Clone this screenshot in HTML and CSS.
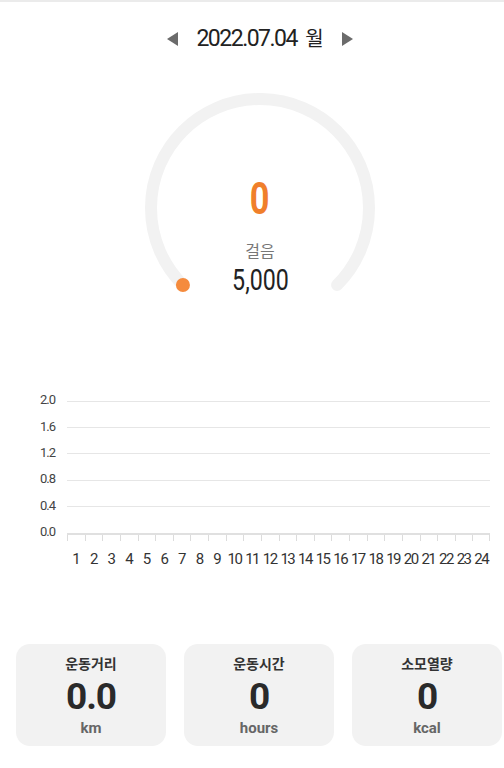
FILE: index.html
```html
<!DOCTYPE html>
<html lang="ko">
<head>
    <meta charset="UTF-8">
    <meta name="viewport" content="width=device-width, initial-scale=1.0">
    <title>걸음</title>
    <link rel="stylesheet" href="styles.css">
</head>
<body>
    <header class="date-bar">
        <svg class="arrow" width="11" height="14" viewBox="0 0 11 14"><polygon points="11,0 11,14 0,7"/></svg>
        <span class="date">2022.07.04 <span class="weekday">월</span></span>
        <svg class="arrow" width="11" height="14" viewBox="0 0 11 14"><polygon points="0,0 11,7 0,14"/></svg>
    </header>

    <section class="gauge">
        <svg class="gauge-ring" width="230" height="230" viewBox="0 0 230 230">
            <path d="M37.93 192.07 A109 109 0 1 1 192.07 192.07" fill="none" stroke="#f2f2f2" stroke-width="12" stroke-linecap="round"/>
            <circle cx="37.93" cy="192.07" r="7" fill="#f58b3d"/>
        </svg>
        <div class="gauge-value">0</div>
        <div class="gauge-label">걸음</div>
        <div class="gauge-goal">5,000</div>
    </section>

    <section class="chart">
        <div class="chart-row"><span class="y-label">2.0</span><div class="grid-line"></div></div>
        <div class="chart-row"><span class="y-label">1.6</span><div class="grid-line"></div></div>
        <div class="chart-row"><span class="y-label">1.2</span><div class="grid-line"></div></div>
        <div class="chart-row"><span class="y-label">0.8</span><div class="grid-line"></div></div>
        <div class="chart-row"><span class="y-label">0.4</span><div class="grid-line"></div></div>
        <div class="chart-row"><span class="y-label">0.0</span><div class="axis"></div></div>
        <div class="x-labels">
            <span>1</span><span>2</span><span>3</span><span>4</span><span>5</span><span>6</span>
            <span>7</span><span>8</span><span>9</span><span>10</span><span>11</span><span>12</span>
            <span>13</span><span>14</span><span>15</span><span>16</span><span>17</span><span>18</span>
            <span>19</span><span>20</span><span>21</span><span>22</span><span>23</span><span>24</span>
        </div>
    </section>

    <section class="summary">
        <div class="card">
            <div class="card-title">운동거리</div>
            <div class="card-value">0.0</div>
            <div class="card-unit">km</div>
        </div>
        <div class="card">
            <div class="card-title">운동시간</div>
            <div class="card-value">0</div>
            <div class="card-unit">hours</div>
        </div>
        <div class="card">
            <div class="card-title">소모열량</div>
            <div class="card-value">0</div>
            <div class="card-unit">kcal</div>
        </div>
    </section>
</body>
</html>
```

FILE: styles.css
```css
body {
    margin: 0;
    padding: 0 0 0 16px;
    border-top: 2px solid #ebebeb;
    background-color: #fff;
    font-family: Roboto, "Noto Sans CJK KR", sans-serif;
    color: #222;
}

.date-bar {
    height: 74px;
    display: flex;
    align-items: center;
    justify-content: center;
    gap: 18px;
}

.arrow {
    fill: #6b6b6b;
}

.date {
    font-size: 23px;
    line-height: 30px;
    letter-spacing: -1.5px;
    color: #222;
}

.weekday {
    margin-left: 4px;
    font-size: 20px;
    letter-spacing: 0;
}

.gauge {
    position: relative;
    width: 230px;
    height: 230px;
    margin: 17px auto 0;
    padding-top: 81px;
    box-sizing: border-box;
    display: flex;
    flex-direction: column;
    align-items: center;
}

.gauge-ring {
    position: absolute;
    top: 0;
    left: 0;
}

.gauge-value,
.gauge-label,
.gauge-goal {
    position: relative;
}

.gauge-value {
    font-weight: bold;
    font-size: 44px;
    line-height: 50px;
    color: #f07f2b;
    transform: scaleX(0.78);
}

.gauge-label {
    margin-top: 16px;
    font-family: "Noto Sans CJK KR", sans-serif;
    font-size: 16px;
    line-height: 20px;
    color: #777;
}

.gauge-goal {
    margin-top: 3px;
    font-size: 29px;
    line-height: 34px;
    color: #222;
    transform: scaleX(0.8);
}

.chart {
    margin: 65px 14px 0 0;
    display: grid;
    grid-template-columns: 39px 1fr;
    column-gap: 12px;
}

.chart-row {
    display: contents;
}

.y-label {
    height: 26.4px;
    display: flex;
    align-items: center;
    justify-content: flex-end;
    padding-bottom: 3px;
    box-sizing: border-box;
    font-size: 13px;
    letter-spacing: -1px;
    color: #444;
}

.grid-line {
    align-self: center;
    height: 1px;
    background-color: #e6e6e6;
}

.axis {
    align-self: start;
    margin-top: 12.7px;
    height: 6px;
    border-top: 2px solid #e0e0e0;
    border-right: 1px solid #dcdcdc;
    background: repeating-linear-gradient(to right, #dcdcdc 0 1px, transparent 1px 17.625px);
}

.x-labels {
    grid-column: 2;
    margin-top: 4px;
    display: grid;
    grid-template-columns: repeat(24, 1fr);
    font-size: 15px;
    line-height: 18px;
    letter-spacing: -1.5px;
    color: #333;
    text-align: center;
}

.summary {
    margin-top: 76px;
    display: grid;
    grid-template-columns: repeat(3, 150px);
    gap: 18px;
}

.card {
    height: 102px;
    padding-top: 9px;
    box-sizing: border-box;
    border-radius: 14px;
    background-color: #f2f2f2;
    display: flex;
    flex-direction: column;
    align-items: center;
}

.card-title {
    font-family: "Noto Sans CJK KR", sans-serif;
    font-weight: bold;
    font-size: 14px;
    line-height: 20px;
    color: #333;
}

.card-value {
    margin-top: 4px;
    font-weight: bold;
    font-size: 37px;
    line-height: 40px;
    letter-spacing: -1px;
    color: #2a2a2a;
}

.card-unit {
    margin-top: 2px;
    font-weight: bold;
    font-size: 15px;
    line-height: 18px;
    color: #666;
}
```
